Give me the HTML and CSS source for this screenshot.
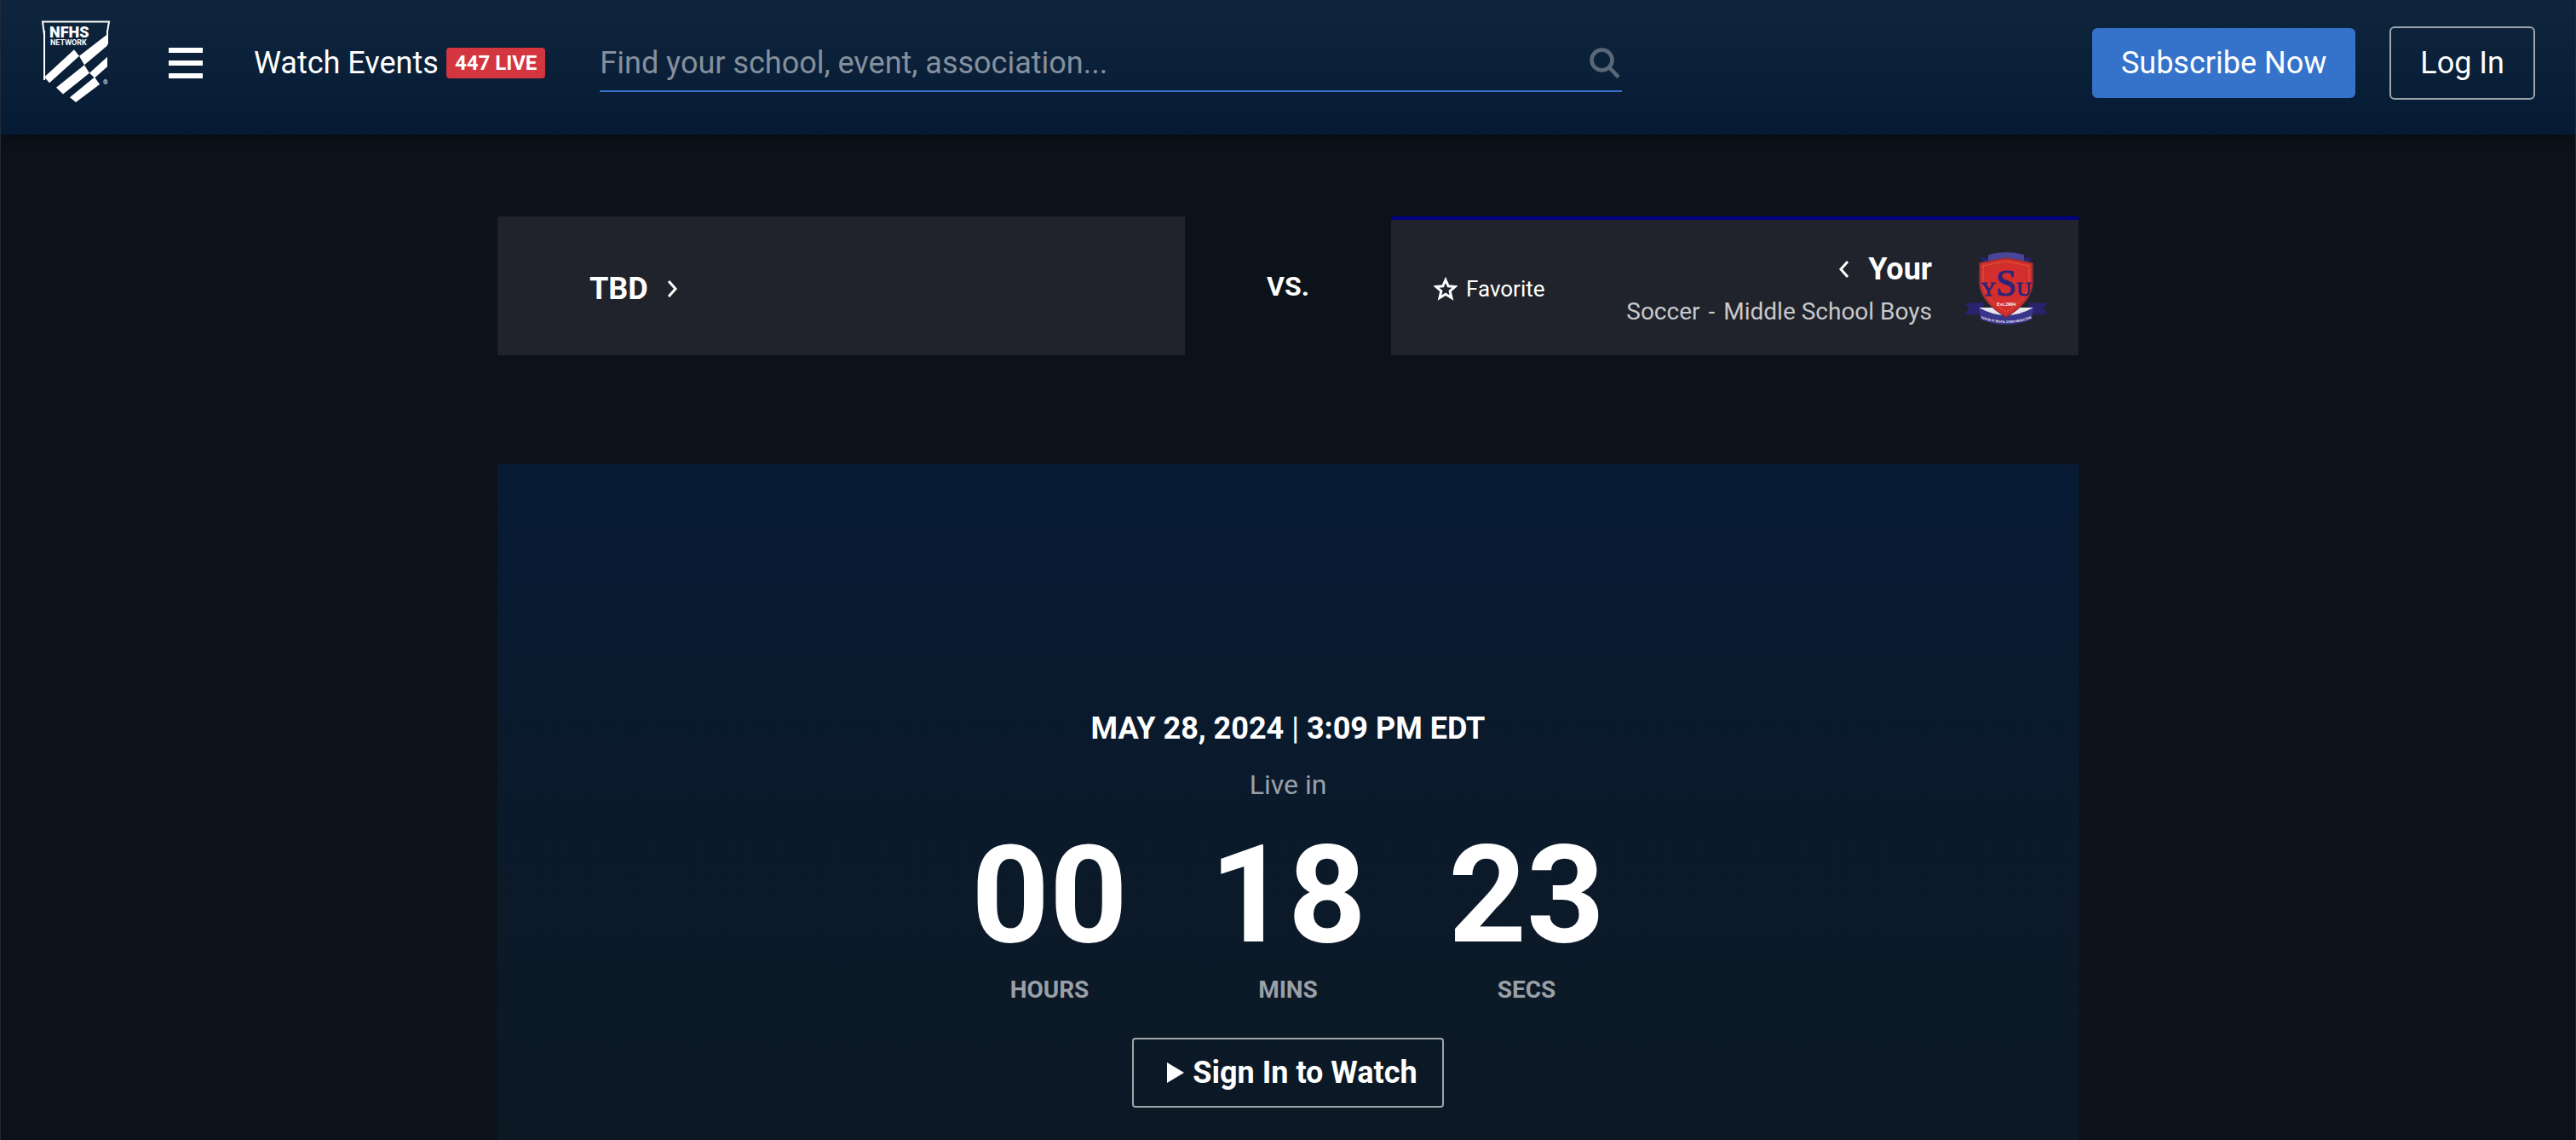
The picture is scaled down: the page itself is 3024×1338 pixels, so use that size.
FILE: index.html
```html
<!DOCTYPE html>
<html lang="en">
<head>
<meta charset="utf-8">
<title>NFHS Network</title>
<link rel="stylesheet" href="styles.css">
</head>
<body>
<header class="header">
  <a class="logo" href="#" aria-label="NFHS Network">
    <svg viewBox="0 0 84 96" width="84" height="96">
      <path d="M4 70V17L2 1.5H80L78 13V28M4 12V70" fill="none" stroke="#fff" stroke-width="2"/>
      <path d="M4 70L39 36L45 44L10 77ZM45 44L78 17V31L51 55ZM18 83L51 55L57 65L26 91ZM57 65L78 45V57L63 71ZM34 95L63 70L69 79L41 101Z" fill="#fff" transform="scale(1 .95)"/>
      <text class="logo-name" x="10" y="20">NFHS</text>
      <text class="logo-sub" x="11" y="29">NETWORK</text>
      <text class="logo-mark" x="73" y="75">®</text>
    </svg>
  </a>
  <button class="menu" type="button" aria-label="Menu"><span></span><span></span><span></span></button>
  <a class="watch" href="#">Watch Events <span class="badge">447 LIVE</span></a>
  <form class="search">
    <input type="text" aria-label="Search" placeholder="Find your school, event, association...">
    <svg viewBox="0 0 36 36" width="36" height="36"><g fill="none" stroke="#596878" stroke-width="4.6"><circle cx="14.5" cy="14.5" r="12"/><path d="M23 23L34 34.500"/></g></svg>
  </form>
  <div class="actions">
    <button class="subscribe" type="button">Subscribe Now</button>
    <button class="login" type="button">Log In</button>
  </div>
</header>
<main class="main">
  <section class="matchup">
    <article class="team">
      <a class="team-name" href="#">TBD
        <svg viewBox="0 0 12 22" width="12" height="22"><path d="M2 2L10 11L2 20" /></svg>
      </a>
    </article>
    <div class="versus">VS.</div>
    <article class="team team-home">
      <button class="favorite" type="button">
        <svg viewBox="0 0 28 28" width="28" height="28"><path d="M14 3.500L17.200 10.800L25.200 11.500L19.100 16.700L21 24.500L14 20.300L7 24.500L8.900 16.700L2.800 11.500L10.800 10.800Z"/></svg>
        Favorite
      </button>
      <div class="team-info">
        <a class="team-name" href="#"><svg viewBox="0 0 12 22" width="12" height="22"><path d="M10 2L2 11L10 20"/></svg>
        Your</a>
        <p class="sport"><span>Soccer</span><span>-</span><span>Middle School Boys</span></p>
      </div>
      <svg class="crest" viewBox="0 0 98 86" width="98" height="86" role="img" aria-label="Your School Uniform crest">
        <path d="M18 7L29 8V16H18L22 12ZM80 7L69 8V16H80L76 12Z" fill="#262472"/>
        <path d="M28 4Q49 -2 70 4V18H28Z" fill="#48459b"/>
        <path d="M0 61L22 60L25 74H0L6 67ZM98 61L76 60L73 74H98L92 67Z" fill="#29236e"/>
        <path d="M17 66L34 66L49 78L64 66H81L74 77H24Z" fill="#e9e5ee"/>
        <path d="M17 66Q49 84 81 66L79 80Q49 92 19 80Z" fill="#39358b"/>
        <path d="M18 14Q34 10 49 8Q64 10 80 14V38Q78 60 49 77Q20 60 18 38Z" fill="#d22e2d" stroke="#8f3036" stroke-width="1.500"/>
        <path d="M22 17Q36 14 49 12Q62 14 76 17V37Q74 56 49 71Q24 56 22 37Z" fill="none" stroke="#e88732" stroke-width="1" stroke-dasharray="1.500 1.500"/>
        <path id="motto" d="M15 77Q49 91 83 77" fill="none"/>
        <text class="crest-initials" x="49" y="52" text-anchor="middle">Y<tspan class="crest-s">S</tspan>U</text>
        <text class="crest-date" x="49" y="64" text-anchor="middle">Est.2004</text>
        <text class="crest-motto"><textPath href="#motto" startOffset="50%" text-anchor="middle">YOUR SCHOOL UNIFORM.COM</textPath></text>
      </svg>
    </article>
  </section>
  <section class="player">
    <p class="date">MAY 28, 2024 <span>|</span> 3:09 PM EDT</p>
    <p class="live-in">Live in</p>
    <div class="countdown">
      <div class="unit"><span class="digits">00</span><span class="label">HOURS</span></div>
      <div class="unit"><span class="digits">18</span><span class="label">MINS</span></div>
      <div class="unit"><span class="digits">23</span><span class="label">SECS</span></div>
    </div>
    <button class="sign-in" type="button"><svg viewBox="0 0 20 24" width="20" height="24"><path d="M0 0L20 12L0 24Z" fill="#fff"/></svg>Sign In to Watch</button>
  </section>
</main>
</body>
</html>
```
FILE: styles.css
```css
* { box-sizing: border-box; }
body {
  margin: 0;
  min-height: 100vh;
  display: flex;
  flex-direction: column;
  border: solid #1f2a36;
  border-width: 0 1px;
  background: #0b1219;
  color: #fff;
  font-family: Roboto, "Liberation Sans", sans-serif;
  font-size: 36px;
  line-height: 42px;
}
p { margin: 0; }
a { color: inherit; text-decoration: none; }
button {
  margin: 0;
  padding: 0;
  border: 0;
  background: none;
  color: inherit;
  font: inherit;
}
svg { display: block; flex: none; }

.header {
  display: flex;
  align-items: flex-start;
  height: 158px;
  padding: 24px 47px 0;
  background: linear-gradient(#0f253d, #061a34);
  box-shadow: 0 4px 16px rgba(0, 0, 0, .4);
}
.logo-name { font: 900 18px Roboto, sans-serif; fill: #fff; }
.logo-sub { font: 700 9px Roboto, sans-serif; fill: #fff; }
.logo-mark { font: 7px Roboto, sans-serif; fill: #fff; }
.menu {
  display: grid;
  gap: 9px;
  width: 40px;
  margin: 32px 0 0 66px;
}
.menu span { height: 6px; background: #fff; }
.watch {
  display: flex;
  align-items: center;
  gap: 9px;
  margin: 29px 0 0 60px;
}
.badge {
  height: 36px;
  padding: 0 10px;
  border-radius: 4px;
  background: #d4363f;
  font-size: 24px;
  font-weight: 700;
  line-height: 36px;
}
.search {
  display: flex;
  align-items: center;
  flex: 0 0 1200px;
  height: 84px;
  margin-left: 64px;
  padding: 18px 2px 0 0;
  border-bottom: 2px solid #3573cb;
}
.search input {
  flex: 1;
  min-width: 0;
  padding: 0;
  border: 0;
  outline: 0;
  background: none;
  color: #fff;
  font: inherit;
}
.search input::placeholder { color: #85909d; opacity: 1; }
.actions {
  display: flex;
  align-items: center;
  gap: 40px;
  margin: 7px 0 0 auto;
}
.subscribe {
  height: 82px;
  padding: 0 34px;
  border-radius: 6px;
  background: #3573cb;
}
.login {
  height: 86px;
  padding: 0 34px;
  border: 2px solid #9fa5ae;
  border-radius: 6px;
}

.main {
  flex: 1;
  display: flex;
  flex-direction: column;
  gap: 128px;
  width: 1856px;
  max-width: 100%;
  margin: 0 auto;
  padding-top: 96px;
}
.matchup {
  display: grid;
  grid-template-columns: 1fr 242px 1fr;
  align-items: center;
}
.team {
  display: flex;
  align-items: center;
  height: 163px;
  padding: 7px 34px 0 108px;
  background: #20232b;
}
.team-home {
  padding: 0 36px 0 50px;
  border-top: 4px solid #000080;
}
.team-name {
  display: flex;
  align-items: center;
  gap: 22px;
  font-weight: 700;
}
.team-name path, .favorite path {
  fill: none;
  stroke: #fff;
  stroke-width: 3;
}
.versus { font-size: 32px; font-weight: 700; text-align: center; }
.favorite {
  display: flex;
  align-items: center;
  gap: 10px;
  padding-top: 2px;
  font-size: 26px;
}
.team-info {
  display: flex;
  flex-direction: column;
  align-items: flex-end;
  gap: 8px;
  margin: 0 38px 0 auto;
  padding-top: 6px;
}
.sport {
  display: flex;
  gap: 10px;
  color: #c8c9cc;
  font-size: 28px;
}
.crest-initials { font: 24px "Liberation Serif", serif; fill: #2a2579; stroke: #2a2579; }
.crest-s { font-size: 44px; }
.crest-date { font: 700 6px "Liberation Serif", serif; fill: #fff; }
.crest-motto { font: 700 4px "Liberation Serif", serif; fill: #fff; }

.player {
  flex: 1;
  display: flex;
  flex-direction: column;
  align-items: center;
  padding: 289px 0 36px;
  background: linear-gradient(#071b35, #0b1a2b 50%, #0c1824);
}
.date { font-weight: 700; }
.date span { font-weight: 400; }
.live-in {
  margin-top: 24px;
  color: #9aa0a8;
  font-size: 32px;
}
.countdown {
  display: flex;
  gap: 80px;
  margin-top: 15px;
}
.unit {
  display: flex;
  flex-direction: column;
  align-items: center;
  width: 200px;
  font-weight: 700;
}
.digits { font-size: 160px; line-height: 188px; }
.label { color: #9aa0a8; font-size: 28px; line-height: 34px; }
.sign-in {
  display: flex;
  align-items: center;
  gap: 10px;
  height: 82px;
  margin-top: 39px;
  padding: 0 29px 0 39px;
  border: 2px solid #9fa5a9;
  border-radius: 4px;
  font-weight: 700;
}
```
